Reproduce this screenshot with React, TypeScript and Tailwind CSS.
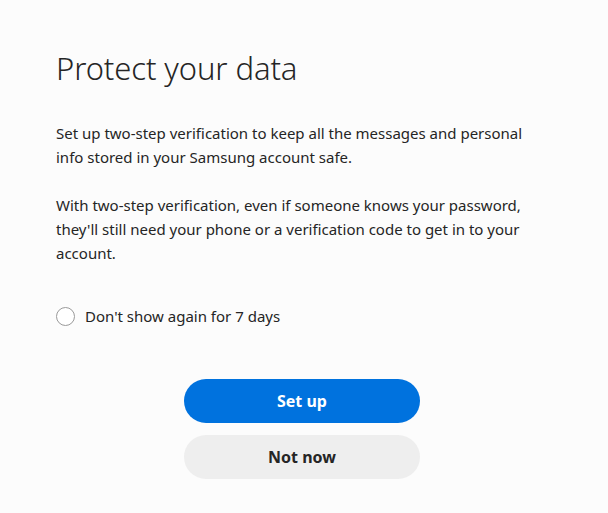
export default function App() {
  return (
    <div
      className="min-h-[513px] bg-[#fcfcfc] text-[#252525] px-[56px] pt-[48px]"
      style={{ fontFamily: '"Noto Sans", "Open Sans", sans-serif' }}
    >
      <h1 className="text-[31px] font-light leading-[40px] tracking-[-0.1px]">
        Protect your data
      </h1>

      <div className="mt-[33px] text-[15px] leading-[24px] max-w-[496px]">
        <p>
          Set up two-step verification to keep all the messages and personal
          info stored in your Samsung account safe.
        </p>
        <p className="mt-[24px]">
          With two-step verification, even if someone knows your password,
          they'll still need your phone or a verification code to get in to
          your account.
        </p>
      </div>

      <label className="mt-[39px] flex items-center gap-[10px] text-[15px] leading-[24px]">
        <span className="w-[19px] h-[19px] rounded-full border-[1.5px] border-[#9a9a9a] bg-white" />
        <span>Don't show again for 7 days</span>
      </label>

      <div className="mt-[51px] pr-[4px] flex flex-col items-center gap-[12px]">
        <button className="w-[236px] h-[44px] rounded-full bg-[#0072de] text-white text-[16px] font-bold">
          Set up
        </button>
        <button className="w-[236px] h-[44px] rounded-full bg-[#eeeeee] text-[#252525] text-[16px] font-bold">
          Not now
        </button>
      </div>
    </div>
  );
}
